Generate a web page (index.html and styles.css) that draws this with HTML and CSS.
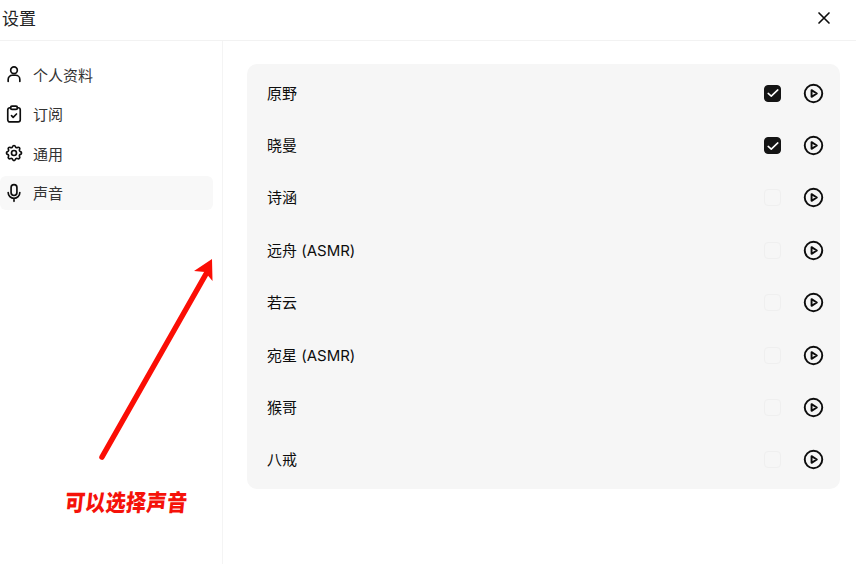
FILE: index.html
```html
<!DOCTYPE html>
<html lang="zh">
<head>
<meta charset="utf-8">
<title>设置</title>
<link rel="stylesheet" href="styles.css">
</head>
<body>
<div class="dialog">
  <header class="header">
    <h1 class="title">设置</h1>
    <button class="close" aria-label="关闭">
      <svg width="20" height="20" viewBox="0 0 24 24" fill="none" stroke="currentColor" stroke-width="2" stroke-linecap="round"><path d="M6 6l12 12M18 6L6 18"/></svg>
    </button>
  </header>
  <div class="body">
    <nav class="nav">
      <a class="nav-item">
        <svg class="nav-icon" viewBox="0 0 24 24" fill="none" stroke="currentColor" stroke-width="2" stroke-linecap="round" stroke-linejoin="round"><circle cx="12" cy="7.500" r="4"/><path d="M5 21v-2.500a5 5 0 0 1 5-5h4a5 5 0 0 1 5 5V21"/></svg>
        <span>个人资料</span>
      </a>
      <a class="nav-item">
        <svg class="nav-icon" viewBox="0 0 24 24" fill="none" stroke="currentColor" stroke-width="2" stroke-linecap="round" stroke-linejoin="round"><path d="M8 4.500H7a2.500 2.500 0 0 0-2.500 2.500v12A2.500 2.500 0 0 0 7 21.500h10a2.500 2.500 0 0 0 2.500-2.500V7A2.500 2.500 0 0 0 17 4.500h-1"/><rect x="8" y="2.500" width="8" height="4" rx="1.500"/><path d="M9 14l2 2 4-4"/></svg>
        <span>订阅</span>
      </a>
      <a class="nav-item">
        <svg class="nav-icon" viewBox="0 0 24 24" fill="none" stroke="currentColor" stroke-width="2" stroke-linecap="round" stroke-linejoin="round"><path d="M10.300 4.300c.4-1.800 3-1.800 3.400 0a1.700 1.700 0 0 0 2.600 1.100c1.500-.9 3.300.8 2.400 2.400a1.700 1.700 0 0 0 1 2.500c1.800.4 1.800 3 0 3.400a1.700 1.700 0 0 0-1 2.600c.9 1.500-.9 3.300-2.400 2.400a1.700 1.700 0 0 0-2.600 1c-.4 1.800-3 1.800-3.400 0a1.700 1.700 0 0 0-2.600-1c-1.500.9-3.300-.9-2.400-2.400a1.700 1.700 0 0 0-1-2.600c-1.800-.4-1.800-3 0-3.400a1.700 1.700 0 0 0 1-2.500c-.9-1.600.9-3.300 2.400-2.400a1.700 1.700 0 0 0 2.600-1.100z"/><circle cx="12" cy="12" r="3"/></svg>
        <span>通用</span>
      </a>
      <a class="nav-item active">
        <svg class="nav-icon" viewBox="0 0 24 24" fill="none" stroke="currentColor" stroke-width="2" stroke-linecap="round" stroke-linejoin="round"><rect x="8.500" y="2" width="7" height="13" rx="3.500"/><path d="M5 11.500a7 7 0 0 0 14 0M12 18.500V22"/></svg>
        <span>声音</span>
      </a>
    </nav>
    <main class="content">
      <section class="panel">
        <div class="row"><span class="name">原野</span><span class="check on"><svg width="14" height="14" viewBox="0 0 16 16" fill="none" stroke="#fff" stroke-width="1.800" stroke-linecap="round" stroke-linejoin="round"><path d="M2.500 8.500l3.500 3 7.500-7"/></svg></span><svg class="play" viewBox="0 0 24 24" fill="none" stroke="currentColor" stroke-width="2.200" stroke-linejoin="round"><circle cx="12" cy="12" r="10"/><path d="M9.800 8.200l6 3.800-6 3.800z"/></svg></div>
        <div class="row"><span class="name">晓曼</span><span class="check on"><svg width="14" height="14" viewBox="0 0 16 16" fill="none" stroke="#fff" stroke-width="1.800" stroke-linecap="round" stroke-linejoin="round"><path d="M2.500 8.500l3.500 3 7.500-7"/></svg></span><svg class="play" viewBox="0 0 24 24" fill="none" stroke="currentColor" stroke-width="2.200" stroke-linejoin="round"><circle cx="12" cy="12" r="10"/><path d="M9.800 8.200l6 3.800-6 3.800z"/></svg></div>
        <div class="row"><span class="name">诗涵</span><span class="check"></span><svg class="play" viewBox="0 0 24 24" fill="none" stroke="currentColor" stroke-width="2.200" stroke-linejoin="round"><circle cx="12" cy="12" r="10"/><path d="M9.800 8.200l6 3.800-6 3.800z"/></svg></div>
        <div class="row"><span class="name">远舟 (ASMR)</span><span class="check"></span><svg class="play" viewBox="0 0 24 24" fill="none" stroke="currentColor" stroke-width="2.200" stroke-linejoin="round"><circle cx="12" cy="12" r="10"/><path d="M9.800 8.200l6 3.800-6 3.800z"/></svg></div>
        <div class="row"><span class="name">若云</span><span class="check"></span><svg class="play" viewBox="0 0 24 24" fill="none" stroke="currentColor" stroke-width="2.200" stroke-linejoin="round"><circle cx="12" cy="12" r="10"/><path d="M9.800 8.200l6 3.800-6 3.800z"/></svg></div>
        <div class="row"><span class="name">宛星 (ASMR)</span><span class="check"></span><svg class="play" viewBox="0 0 24 24" fill="none" stroke="currentColor" stroke-width="2.200" stroke-linejoin="round"><circle cx="12" cy="12" r="10"/><path d="M9.800 8.200l6 3.800-6 3.800z"/></svg></div>
        <div class="row"><span class="name">猴哥</span><span class="check"></span><svg class="play" viewBox="0 0 24 24" fill="none" stroke="currentColor" stroke-width="2.200" stroke-linejoin="round"><circle cx="12" cy="12" r="10"/><path d="M9.800 8.200l6 3.800-6 3.800z"/></svg></div>
        <div class="row"><span class="name">八戒</span><span class="check"></span><svg class="play" viewBox="0 0 24 24" fill="none" stroke="currentColor" stroke-width="2.200" stroke-linejoin="round"><circle cx="12" cy="12" r="10"/><path d="M9.800 8.200l6 3.800-6 3.800z"/></svg></div>
      </section>
    </main>
  </div>
  <svg class="arrow" width="856" height="564" viewBox="0 0 856 564" aria-hidden="true"><path d="M102 457L206 274" stroke="#fb0e05" stroke-width="5.500" stroke-linecap="round"/><path d="M212 259L212.500 281 205 272 194 271z" fill="#fb0e05"/></svg>
  <div class="note">可以选择声音</div>
</div>
</body>
</html>
```
FILE: styles.css
```css
* { box-sizing: border-box; }
html, body { margin: 0; height: 100%; }
body {
  background: #fff;
  color: #0d0d0d;
  font-family: Inter, "Noto Sans CJK SC", sans-serif;
  overflow: hidden;
}
.dialog { position: relative; width: 856px; height: 564px; display: flex; flex-direction: column; }
.header {
  height: 41px;
  flex: none;
  display: flex;
  align-items: center;
  justify-content: space-between;
  padding: 0 22px 4px 2px;
  border-bottom: 1px solid #f2f2f2;
}
.title { margin: 0; padding-top: 2px; font-size: 17px; font-weight: 400; line-height: 24px; color: #222; }
.close { border: 0; background: none; padding: 0; width: 20px; height: 20px; color: #0d0d0d; display: block; }
.close svg { display: block; }
.body { flex: 1; display: flex; min-height: 0; }
.nav {
  width: 223px;
  flex: none;
  padding: 16px 9px 0 0;
  border-right: 1px solid #f4f4f4;
  display: flex;
  flex-direction: column;
  gap: 5px;
}
.nav-item {
  height: 34.500px;
  display: flex;
  align-items: center;
  gap: 9px;
  padding-left: 4px;
  font-size: 15px;
  color: #333;
  border-radius: 6px;
}
.nav-item.active { background: #f8f8f8; }
.nav-icon { width: 20px; height: 20px; color: #0d0d0d; flex: none; }
.content { flex: 1; padding: 23px 16px 0 24px; }
.panel {
  background: #f6f6f6;
  border-radius: 10px;
  padding: 3px 16px 3px 20px;
}
.row { height: 52.400px; display: flex; align-items: center; gap: 22px; }
.name { flex: 1; padding-bottom: 2px; font-size: 15px; color: #0d0d0d; }
.check {
  width: 17px;
  height: 17px;
  border-radius: 4px;
  border: 1px solid #efefef;
  display: flex;
  align-items: center;
  justify-content: center;
}
.check.on { background: #141414; border-color: #141414; }
.play { width: 21px; height: 21px; flex: none; color: #0d0d0d; }
.arrow { position: absolute; left: 0; top: 0; pointer-events: none; }
.note {
  position: absolute;
  left: 65px;
  top: 488px;
  font-size: 20px;
  line-height: 30px;
  font-weight: 900;
  letter-spacing: 0.400px;
  color: #f5120a;
  transform: skewX(-6deg) scaleY(1.15);
}
```
